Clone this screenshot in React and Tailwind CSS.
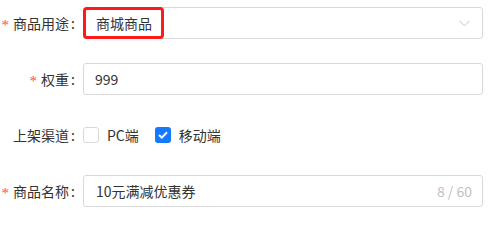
import React from "react";

function Label({ required, children }) {
  return (
    <div className="w-[83px] shrink-0 flex items-center justify-end pr-[8px] text-[14px] text-[#333]">
      {required && (
        <span className="text-[#ff4d4f] mr-[4px] text-[15px] leading-none translate-y-[2px]" style={{ fontFamily: "'Liberation Serif', serif" }}>*</span>
      )}
      <span>{children}</span>
      <span className="ml-[2px]">:</span>
    </div>
  );
}

export default function App() {
  return (
    <div
      className="w-[490px] h-[214px] bg-white pt-[7px] overflow-hidden"
      style={{ fontFamily: "'Noto Sans CJK SC', 'Noto Sans', sans-serif" }}
    >
      {/* Row 1 */}
      <div className="flex h-[32px] mb-[24px]">
        <Label required>商品用途</Label>
        <div className="relative w-[400px] h-[32px] border border-[#d9d9d9] rounded-[3px] flex items-center pl-[12px] pr-[12px]">
          <span className="text-[14px] text-[#333] flex-1">商城商品</span>
          <svg width="11" height="7" viewBox="0 0 11 7" fill="none" className="mt-[1px]">
            <path d="M0.5 0.8 L5.5 5.8 L10.5 0.8" stroke="#c4c4c4" strokeWidth="1" />
          </svg>
          <div className="absolute left-[-1px] top-[-1px] w-[81px] h-[32px] border-[3px] border-[#ff1a1a] rounded-[4px]"></div>
        </div>
      </div>

      {/* Row 2 */}
      <div className="flex h-[32px] mb-[24px]">
        <Label required>权重</Label>
        <div className="w-[400px] h-[32px] border border-[#d9d9d9] rounded-[3px] flex items-center px-[11px]">
          <span className="text-[14px] text-[#333]">999</span>
        </div>
      </div>

      {/* Row 3 */}
      <div className="flex h-[32px] mb-[24px] items-center">
        <Label>上架渠道</Label>
        <div className="flex items-center text-[14px] text-[#333]">
          <span className="w-[16px] h-[16px] border border-[#d9d9d9] rounded-[3px] bg-white"></span>
          <span className="px-[8px]">PC端</span>
          <span className="ml-[8px] w-[16px] h-[16px] rounded-[3px] bg-[#1677ff] flex items-center justify-center">
            <svg width="10" height="8" viewBox="0 0 10 8" fill="none">
              <path d="M1 4 L3.8 6.6 L9 1.3" stroke="white" strokeWidth="2" fill="none" />
            </svg>
          </span>
          <span className="px-[8px]">移动端</span>
        </div>
      </div>

      {/* Row 4 */}
      <div className="flex h-[32px]">
        <Label required>商品名称</Label>
        <div className="w-[400px] h-[32px] border border-[#d9d9d9] rounded-[3px] flex items-center pl-[12px] pr-[10px]">
          <span className="text-[14px] text-[#333] flex-1">10元满减优惠券</span>
          <span className="text-[14px] text-[#bfbfbf]">8 / 60</span>
        </div>
      </div>
    </div>
  );
}
